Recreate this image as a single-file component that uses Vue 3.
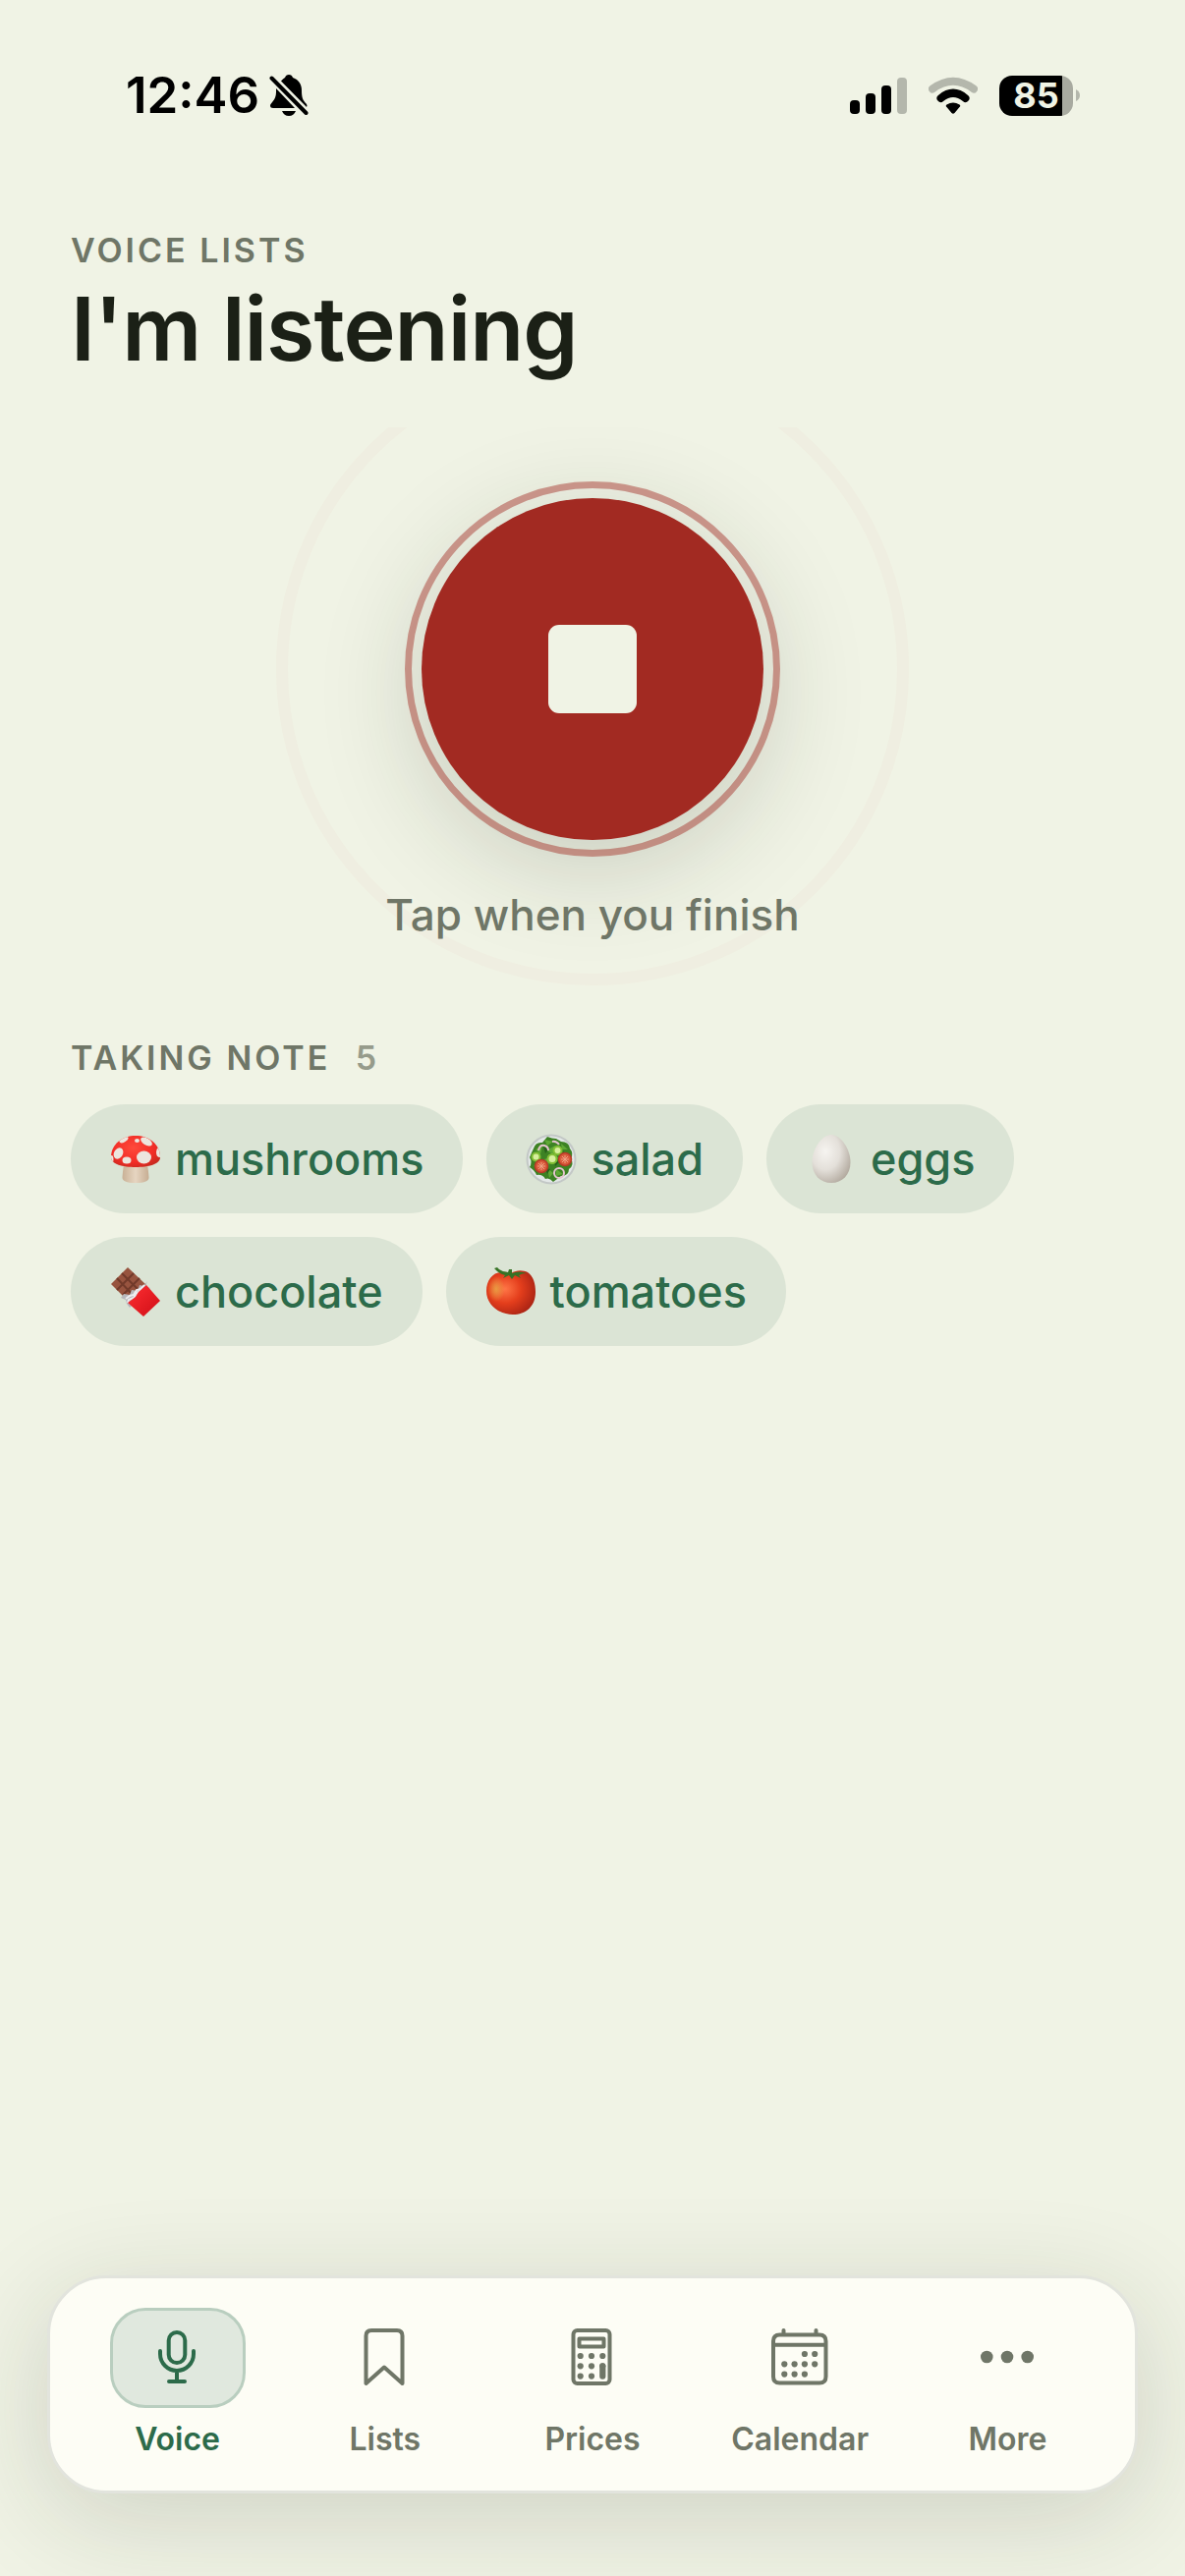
<script setup>
import { ref } from "vue";

const items = ref(["mushrooms", "salad", "eggs", "chocolate", "tomatoes"]);

const tabs = ["Voice", "Lists", "Prices", "Calendar", "More"];
const activeTab = ref("Voice");
</script>

<template>
  <div class="screen">
    <div class="status-bar">
      <div class="clock">
        <span>12:46</span>
        <svg width="40" height="44" viewBox="0 0 40 44" aria-hidden="true">
          <path d="M12 7.500Q14.500 4.500 16 4Q17 1 20 1T24 4C30 6 33 11 33 17C33 24 34 27 38 31Q39 33 38 34Z" />
          <path d="M7 15L26 35H4Q1 35 1 32.500C1 30 7 27 7 19Z" />
          <path d="M13 38H27Q25 43 20 43T13 38Z" />
          <path class="slash" d="M2.500 4.500L37.500 40" />
        </svg>
      </div>
      <div class="signals">
        <svg width="58" height="38" viewBox="0 0 58 38" aria-hidden="true">
          <rect y="24" width="10" height="14" rx="4" />
          <rect x="16" y="17" width="10" height="21" rx="4" />
          <rect x="32" y="9" width="10" height="29" rx="4" />
          <rect class="faint" x="48" y="1" width="10" height="37" rx="4" />
        </svg>
        <svg width="50" height="38" viewBox="0 0 50 38" aria-hidden="true">
          <path class="arc faint-arc" d="M4 12.500Q25 -3 46 12.500" />
          <path class="arc" d="M12.500 22Q25 11.500 37.500 22" />
          <path d="M18.500 31Q17 29.500 18.500 28.500Q25 24.500 31.500 28.500Q33 29.500 31.500 31L26.500 37Q25 38.500 23.500 37Z" />
        </svg>
        <div class="battery">
          <span class="level">85</span>
          <svg width="4" height="12" viewBox="0 0 4 12" aria-hidden="true">
            <path class="faint" d="M0 0Q4 2 4 6T0 12Z" />
          </svg>
        </div>
      </div>
    </div>

    <header>
      <p class="eyebrow">VOICE LISTS</p>
      <h1>I'm listening</h1>
    </header>

    <section class="recorder">
      <div class="stage">
        <span class="ripple"></span>
        <button type="button" class="record" aria-label="Stop recording">
          <span class="stop"></span>
        </button>
        <span class="ring"></span>
      </div>
      <p class="hint">Tap when you finish</p>
    </section>

    <main>
      <h2 class="eyebrow">TAKING NOTE <span class="count">{{ items.length }}</span></h2>
      <ul class="chips">
        <li v-for="item in items" :key="item">
          <svg v-if="item === 'mushrooms'" width="52" height="52" viewBox="0 0 52 52" aria-hidden="true">
            <defs>
              <linearGradient id="stem" x1="0" x2="1">
                <stop offset="0" stop-color="#c9b196" />
                <stop offset=".5" stop-color="#e6d5c1" />
                <stop offset="1" stop-color="#c6ad92" />
              </linearGradient>
              <radialGradient id="cap" cx=".45" cy=".4" r=".6">
                <stop offset="0" stop-color="#ff4a3c" />
                <stop offset=".7" stop-color="#f12c26" />
                <stop offset="1" stop-color="#c92a20" />
              </radialGradient>
              <clipPath id="cap-shape">
                <path d="M1 24C1 10 13 2 26 2S51 10 51 24C51 31 39 34 26 34S1 31 1 24Z" />
              </clipPath>
            </defs>
            <path fill="url(#stem)" d="M14 31H38Q39 38 39.500 44Q40 50 26 50T12.500 44Q13 38 14 31Z" />
            <g clip-path="url(#cap-shape)">
              <rect width="52" height="36" fill="url(#cap)" />
              <g fill="#ece6de">
                <ellipse cx="8.500" cy="20" rx="4.500" ry="6" transform="rotate(30 8.500 20)" />
                <ellipse cx="34.500" cy="24" rx="7.500" ry="6.500" />
                <ellipse cx="17" cy="27" rx="4.500" ry="3.500" />
                <ellipse cx="37" cy="8" rx="6.500" ry="3.500" transform="rotate(32 37 8)" />
                <ellipse cx="14" cy="6" rx="5" ry="2.500" transform="rotate(-28 14 6)" />
                <ellipse cx="27.500" cy="7" rx="2.500" ry="2" />
                <ellipse cx="50" cy="19" rx="3" ry="5" />
                <ellipse cx="1.500" cy="26" rx="2" ry="4" />
              </g>
            </g>
          </svg>

          <svg v-else-if="item === 'salad'" width="52" height="52" viewBox="0 0 52 52" aria-hidden="true">
            <circle cx="26" cy="26" r="25.500" fill="#c3c8c6" />
            <circle cx="26" cy="26" r="23.500" fill="#e3e8e7" />
            <path fill="#3d8224" d="M22 3Q27 5 31 5L36 8Q44 8 45 15Q49 20 46 25Q50 32 44 36Q44 43 36 43Q32 46 28 49Q24 44 20 46Q17 41 11 42Q9 37 4 34Q7 29 4 24Q6 19 8 15Q10 8 17 9Z" />
            <path fill="#5fa935" d="M19 6L28 8L22 12ZM10 16L17 12L15 21ZM21 17L30 12L28 21ZM32 24L40 25L36 32ZM19 26L25 24L23 33ZM8 32L16 37L14 41ZM22 35L28 40L24 45ZM36 10L43 16L37 16ZM31 36L38 41L31 43ZM8 24L14 25L11 29Z" />
            <path fill="#27601b" d="M18 13L24 15L20 20ZM28 25L34 29L30 33ZM38 18L45 22L40 23ZM20 35L25 36L22 41Z" />
            <g fill="#d7ef9d" stroke="#82bf35" stroke-width="2">
              <circle cx="10.500" cy="23.500" r="4" />
              <circle cx="27" cy="25.500" r="4.500" />
              <circle cx="32.500" cy="17" r="4" />
            </g>
            <g fill="#d95b3c" stroke="#b83a28" stroke-width="1.500">
              <circle cx="16" cy="33" r="6.500" />
              <circle cx="40" cy="26" r="6.500" />
            </g>
            <path class="seeds" d="M12 33H20M16 29V37M13 30L19 36M19 30L13 36M36 26H44M40 22V30M37 23L43 29M43 23L37 29" />
            <g class="onion">
              <path d="M13 17Q14 11 19 12Q23 13 23 17M27 8Q31 7 34 11" />
              <circle cx="34" cy="40" r="5" />
            </g>
          </svg>

          <svg v-else-if="item === 'eggs'" width="52" height="52" viewBox="0 0 52 52" aria-hidden="true">
            <defs>
              <radialGradient id="egg" cx=".35" cy=".35" r=".75">
                <stop offset="0" stop-color="#f6f4f0" />
                <stop offset=".5" stop-color="#e4e0da" />
                <stop offset="1" stop-color="#b0a79c" />
              </radialGradient>
            </defs>
            <path fill="url(#egg)" d="M26 1C36 1 45.500 16 45.500 29S37 50 26 50S6.500 42 6.500 29S16 1 26 1Z" />
          </svg>

          <svg v-else-if="item === 'chocolate'" width="52" height="52" viewBox="0 0 52 52" aria-hidden="true">
            <defs>
              <linearGradient id="wrapper" x1="0" y1="0" x2="1" y2="1">
                <stop offset="0" stop-color="#ff3033" />
                <stop offset="1" stop-color="#cf0d16" />
              </linearGradient>
            </defs>
            <path fill="#97543f" d="M18 1L37 19L17 34L1 18Z" />
            <path class="grooves" d="M12 7L30 25M7 12L24 30M24 7L7 24M30 12L13 29" />
            <path fill="#b8b8bc" d="M38 15L36 20L41 22L20 42L17 38L16 34L11 32L14 28L20 29L22 24L28 25L30 19L34 20Z" />
            <path class="foil" d="M35 19L31 23L27 24L24 29L20 30L16 33M33 24L27 27L24 32L19 34L18 37" />
            <path fill="url(#wrapper)" d="M37 19L51 35L34 51L18 37L26 31L29 26Z" />
          </svg>

          <svg v-else width="52" height="52" viewBox="0 0 52 52" aria-hidden="true">
            <defs>
              <radialGradient id="tomato" cx=".38" cy=".42" r=".65">
                <stop offset="0" stop-color="#ff7546" />
                <stop offset=".5" stop-color="#e43e1c" />
                <stop offset="1" stop-color="#ac2414" />
              </radialGradient>
              <radialGradient id="glow" cx=".5" cy=".5" r=".5">
                <stop offset="0" stop-color="#e99a42" />
                <stop offset="1" stop-color="#e99a42" stop-opacity="0" />
              </radialGradient>
            </defs>
            <path fill="url(#tomato)" d="M26 7C32 3 39 4 43 6C49 10 51 18 51 26C51 41 41 49 28 49S1 40 1 25C1 15 7 6 16 6Q22 5 26 7Z" />
            <ellipse cx="11" cy="23" rx="9" ry="13" fill="url(#glow)" />
            <path fill="#377226" d="M9 2L12 1Q15 5 23 6L24 3L27 3L27 7Q34 4 42 7Q37 7 34 9L36 12L30 9L27 13L24 9L18 12L20 9Q14 8 9 2Z" />
          </svg>
          <span>{{ item }}</span>
        </li>
      </ul>
    </main>

    <nav aria-label="Main">
      <a v-for="tab in tabs" :key="tab" href="#" :class="{ active: tab === activeTab }" @click.prevent="activeTab = tab">
        <span class="pill">
          <svg width="72" height="72" viewBox="0 0 72 72" aria-hidden="true">
            <g v-if="tab === 'Voice'" class="line">
              <rect x="26.700" y="10" width="16.600" height="31" rx="8.300" />
              <path d="M18 29V32A17 17 0 0 0 52 32V29M35 49V60M27 60H43" />
            </g>
            <path v-else-if="tab === 'Lists'" class="line" d="M16.500 62V13.500Q16.500 8 22 8H48Q53.500 8 53.500 13.500V62L35 45.500Z" />
            <g v-else-if="tab === 'Prices'">
              <g class="line">
                <rect x="16.500" y="8" width="37" height="54" rx="4" />
                <rect x="22.500" y="16.500" width="25" height="8" />
              </g>
              <circle v-for="n in 8" :key="n" :cx="23.7 + (n - 1) % 3 * 11.3" :cy="34 + Math.floor((n - 1) / 3) * 10.3" r="3.100" />
              <rect x="43.200" y="41.200" width="6.200" height="16.500" rx="3" />
            </g>
            <g v-else-if="tab === 'Calendar'">
              <path class="line" d="M9 19Q9 12.500 15.500 12.500H56Q62.500 12.500 62.500 19V55Q62.500 61.500 56 61.500H15.500Q9 61.500 9 55ZM9 22.700H62.500M19.500 8V12M52.500 8V12" />
              <circle v-for="n in [2, 3, 4, 5, 6, 7, 8, 9, 10]" :key="n" :cx="20.3 + n % 4 * 10.3" :cy="32 + Math.floor(n / 4) * 10.3" r="3.100" />
            </g>
            <g v-else>
              <circle cx="15.300" cy="35" r="6.300" />
              <circle cx="36" cy="35" r="6.300" />
              <circle cx="56.700" cy="35" r="6.300" />
            </g>
          </svg>
        </span>
        <span>{{ tab }}</span>
      </a>
    </nav>
  </div>
</template>

<style>
body {
  background-color: #f0f3e5;
}
</style>

<style scoped>
.screen {
  --green: #2c6b4a;
  --grey: #6f7667;
  --red: #a22a22;

  display: flex;
  flex-direction: column;
  min-height: 100vh;
  background-color: #f0f3e5;
  color: var(--grey);
  font-family: Inter, "Open Sans", sans-serif;
}

svg {
  display: block;
  flex: none;
  fill: currentColor;
}

p,
h1,
h2,
ul {
  margin: 0;
  padding: 0;
}

.status-bar {
  display: flex;
  justify-content: space-between;
  align-items: center;
  height: 60px;
  padding: 67px 107px 0 128px;
  color: #000;
}

.clock {
  display: flex;
  align-items: center;
  gap: 10px;
  font-size: 51px;
  line-height: 60px;
  font-weight: 600;
}

.slash {
  fill: none;
  stroke: #000;
  stroke-width: 4;
  stroke-linecap: round;
}

.signals {
  display: flex;
  align-items: center;
  gap: 22px;
}

.faint {
  fill: #b4b7ac;
}

.arc {
  fill: none;
  stroke: #000;
  stroke-width: 8;
  stroke-linecap: round;
}

.faint-arc {
  stroke: #b4b7ac;
}

.battery {
  display: flex;
  align-items: center;
  gap: 3px;
}

.level {
  width: 75px;
  border-radius: 13px;
  background: linear-gradient(to right, #000 64px, #a8aaa0 64px);
  color: #f0f3e5;
  font-size: 36px;
  line-height: 41px;
  font-weight: 700;
  text-align: center;
}

header {
  padding: 105px 72px 0;
}

.eyebrow {
  font-size: 34px;
  line-height: 46px;
  font-weight: 600;
  letter-spacing: 3px;
}

h1 {
  color: #1b2016;
  font-size: 90px;
  line-height: 114px;
  font-weight: 600;
  letter-spacing: -1px;
}

.recorder {
  display: flex;
  flex-direction: column;
  align-items: center;
  gap: 44px;
  margin-top: 43px;
  padding: 72px 0 91px;
  overflow: hidden;
}

.stage {
  position: relative;
}

.record {
  display: grid;
  place-items: center;
  width: 348px;
  height: 348px;
  padding: 0;
  border: 0;
  border-radius: 50%;
  background-color: var(--red);
  box-shadow: 0 24px 108px rgba(28, 38, 24, .2);
}

.stop {
  width: 90px;
  height: 90px;
  border-radius: 11px;
  background-color: #f0f3e5;
}

.ring,
.ripple {
  position: absolute;
  border-radius: 50%;
  pointer-events: none;
}

.ring {
  inset: -17px;
  border: 7px solid rgba(162, 42, 34, .45);
}

.ripple {
  inset: -148px;
  border: 12px solid rgba(220, 120, 120, .04);
}

.hint {
  position: relative;
  font-size: 44px;
  line-height: 64px;
  font-weight: 500;
}

main {
  padding: 0 72px;
}

.count {
  margin-left: 14px;
  color: #969b8b;
}

.chips {
  display: flex;
  flex-wrap: wrap;
  gap: 24px;
  margin-top: 24px;
  padding-bottom: 48px;
  list-style: none;
}

.chips li {
  display: flex;
  align-items: center;
  gap: 14px;
  height: 111px;
  padding: 0 40px;
  border-radius: 56px;
  background-color: #dbe4d5;
  color: var(--green);
  font-size: 45px;
  line-height: 64px;
  font-weight: 500;
}

.seeds {
  stroke: #f0a184;
}

.onion {
  fill: none;
  stroke: #e5c5cf;
  stroke-width: 2;
}

.grooves {
  fill: none;
  stroke: #713a2a;
  stroke-width: 2;
}

.foil {
  fill: none;
  stroke: #ededf0;
  stroke-width: 2;
}

nav {
  display: grid;
  grid-template-columns: repeat(5, 1fr);
  margin: auto 48px 84px;
  padding: 30px 24px;
  border: 3px solid #e2e4dd;
  border-radius: 60px;
  background-color: #fdfdf5;
  box-shadow: 0 24px 108px rgba(28, 38, 24, .16);
}

nav a {
  display: flex;
  flex-direction: column;
  align-items: center;
  gap: 10px;
  color: var(--grey);
  font-size: 32px;
  line-height: 44px;
  font-weight: 600;
  text-decoration: none;
}

nav a.active {
  color: var(--green);
}

.pill {
  display: grid;
  place-items: center;
  width: 132px;
  height: 96px;
  border: 3px solid transparent;
  border-radius: 36px;
}

.active .pill {
  border-color: #b9cebf;
  background-color: #e0e8de;
}

.line {
  fill: none;
  stroke: currentColor;
  stroke-width: 4;
  stroke-linecap: round;
  stroke-linejoin: round;
}
</style>
